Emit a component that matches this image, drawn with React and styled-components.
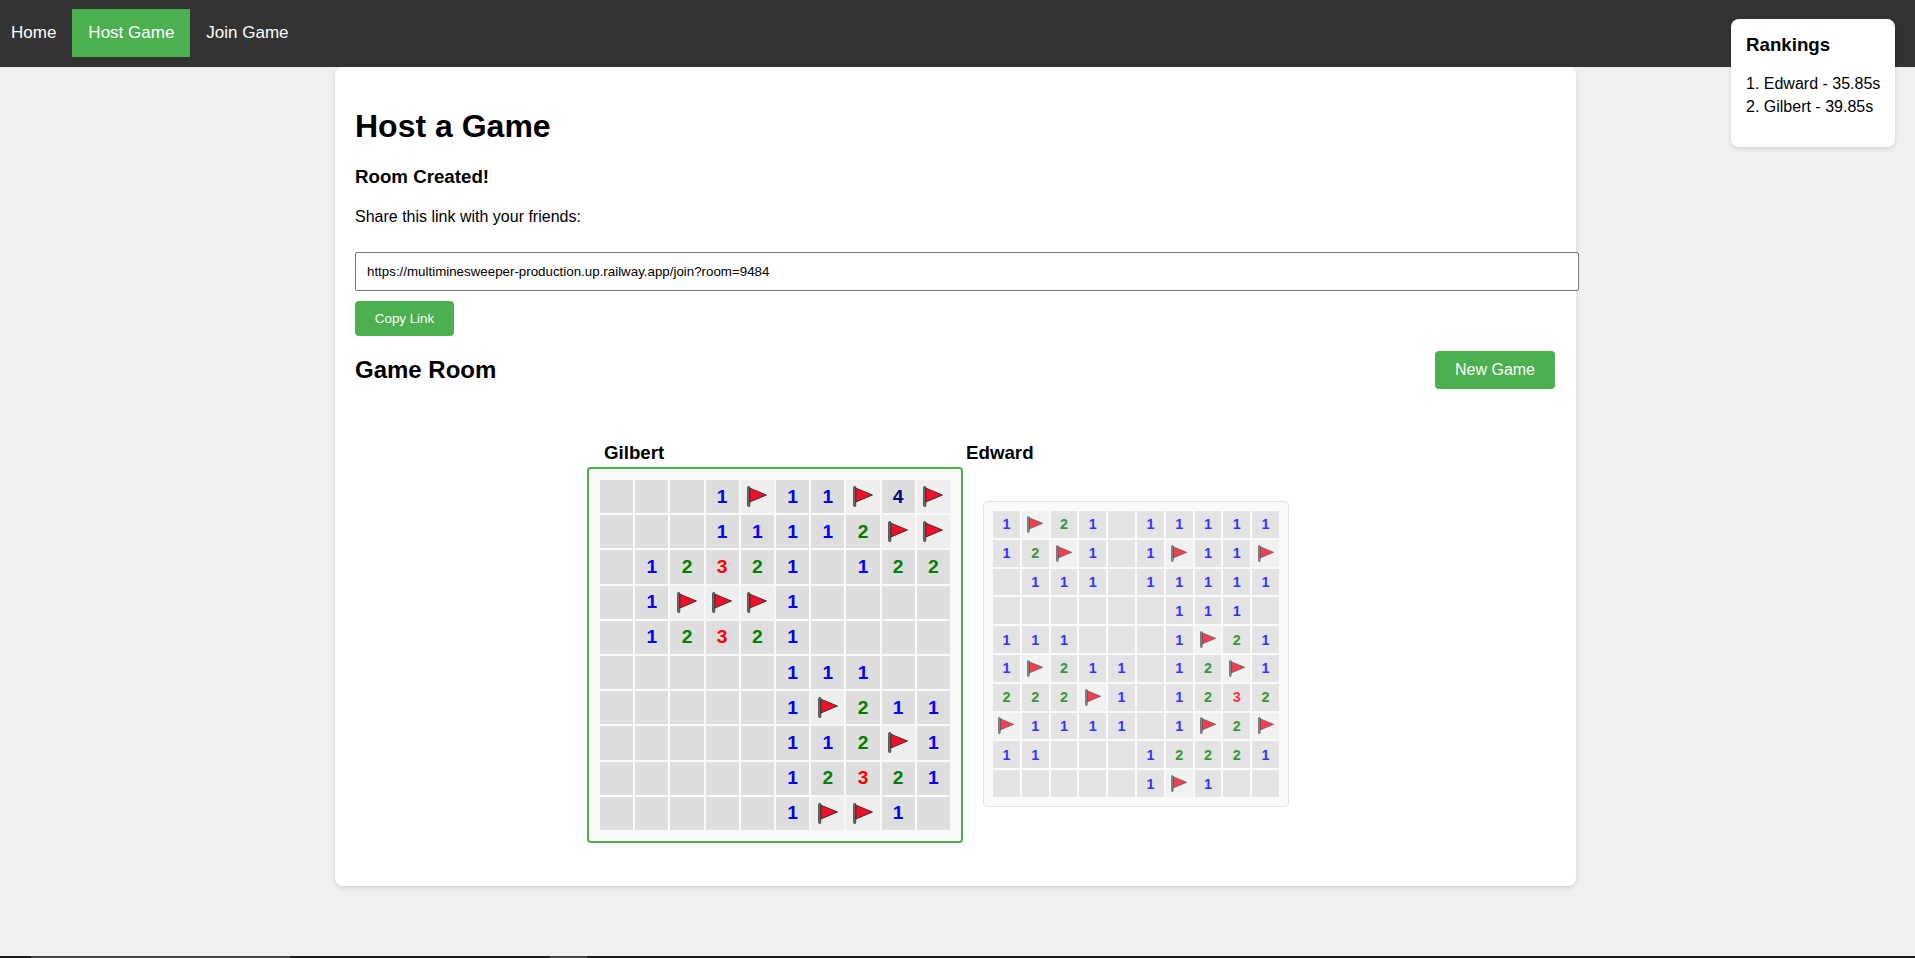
import React from "react";
import styled, { createGlobalStyle } from "styled-components";

const Global = createGlobalStyle`
  html, body { margin: 0; padding: 0; background: #f0f0f0; }
  * { box-sizing: border-box; }
  body { font-family: "Liberation Sans", Arial, sans-serif; color: #000; }
`;
const Page = styled.div`
  min-height: 958px; height: 958px; overflow: hidden; display: flex; flex-direction: column; position: relative;
`;
const Nav = styled.nav`
  background: #333; height: 67px; padding-bottom: 2px; display: flex; align-items: center; flex: none;
`;
const NavLink = styled.a`
  color: #fff; font-size: 17px; padding: 0 16px; height: 48px; line-height: 47px;
  background: ${p => (p.$active ? "#4caf50" : "transparent")};
  &:first-child { padding: 0 16px 0 11px; }
`;
const Main = styled.main`
  flex: 1; display: flex; justify-content: center; align-items: flex-start; padding-right: 4px;
`;
const Card = styled.section`
  width: 1241px; height: 819px; background: #fff; border-radius: 8px; padding: 0 20px;
  box-shadow: 0 2px 5px rgba(0,0,0,.12); flex: none;
`;
const Title = styled.h1`
  font-size: 32px; line-height: 37px; margin: 41px 0 0; font-weight: 700;
`;
const Sub = styled.h3`
  font-size: 18.72px; line-height: 22px; margin: 21px 0 0; font-weight: 700;
`;
const Para = styled.p`
  font-size: 16px; line-height: 18px; margin: 20px 0 0;
`;
const LinkInput = styled.input`
  display: block; width: 1224px; height: 39px; margin-top: 26px; padding: 0 11px;
  border: 1px solid #767676; border-radius: 2px; font: 13.33px "Liberation Sans", Arial, sans-serif; color: #000; background: #fff;
`;
const CopyButton = styled.button`
  display: block; width: 99px; height: 35px; margin-top: 10px; border: 0; border-radius: 4px;
  background: #4caf50; color: #fff; font: 400 13.33px "Liberation Sans", Arial, sans-serif; padding: 0;
`;
const RoomHead = styled.div`
  display: flex; justify-content: space-between; align-items: center; margin: 15px 1px 0 0; height: 38px;
`;
const RoomTitle = styled.h2`
  font-size: 24px; line-height: 28px; margin: 0; font-weight: 700;
`;
const NewButton = styled.button`
  width: 120px; height: 38px; border: 0; border-radius: 4px; background: #4caf50; color: #fff;
  font: 16px "Liberation Sans", Arial, sans-serif; padding: 0;
`;
const Boards = styled.div`
  display: grid; grid-template-columns: 379px auto; justify-content: start; align-items: center;
  margin: 53px 0 0 232px;
`;
const PlayerName = styled.div`
  font-size: 18.72px; font-weight: 700; line-height: 22px; height: 25px;
  padding-left: ${p => (p.$main ? "17px" : "0")};
`;
const BoardFrame = styled.div`
  background: #f9f9f9;
  border: ${p => (p.$main ? "2px solid #4caf50" : "1px solid #ddd")};
  border-radius: 4px;
  padding: ${p => (p.$main ? "11px" : "9px")};
  width: ${p => (p.$main ? "376px" : "306px")};
  margin: ${p => (p.$main ? "0" : "0 0 2px 17px")};
  opacity: ${p => (p.$main ? 1 : 0.8)};
`;
const Grid = styled.div`
  display: grid; gap: 2px;
  grid-template-columns: repeat(10, 1fr);
  grid-auto-rows: ${p => (p.$main ? "33.2px" : "26.8px")};
`;
const Cell = styled.div`
  background: ${p => (p.$flag ? "#eee" : "#ddd")};
  display: flex; align-items: center; justify-content: center;
  font-weight: 700; font-size: ${p => (p.$main ? "19.2px" : "14.4px")};
  color: ${p => ({ 1: "#0000ff", 2: "#008000", 3: "#ff0000", 4: "#000080" }[p.$n] || "#000")};
`;
const Panel = styled.aside`
  position: absolute; top: 19px; right: 20px; width: 164px; height: 128px; background: #fff; border-radius: 8px;
  padding: 15px; box-shadow: 0 2px 5px rgba(0,0,0,.12);
`;
const PanelTitle = styled.h3`
  font-size: 18.72px; line-height: 22px; margin: 0 0 16px; font-weight: 700;
`;
const RankItem = styled.div`
  font-size: 16px; line-height: 23px; white-space: nowrap;
`;
const Strip = styled.div`
  position: absolute; left: 0; right: 0; bottom: 0; height: 2px; background: #1c1c1c; display: flex;
`;
const StripTab = styled.div`
  flex: none; height: 2px; width: ${p => p.$w}px; margin-left: ${p => p.$at}px;
  background: ${p => p.$tone};
`;

const FlagIcon = ({ main }) => (
  <svg width={main ? 20 : 16} height={main ? 21 : 17} viewBox="0 0 19 20" aria-hidden="true">
    <path d="M2.4 1.9 L18.6 8.6 L2.4 15.4 Z" fill="#ed1028" stroke="#1a1a1a" strokeWidth="0.7" strokeLinejoin="round" />
    <rect x="0.6" y="0.4" width="2" height="19.2" rx="1" fill="#777" stroke="#1a1a1a" strokeWidth="0.7" />
  </svg>
);

const main = [
  "   1F11F4F", "   11112FF", " 12321 122", " 1FFF1    ", " 12321    ",
  "     111  ", "     1F211", "     112F1", "     12321", "     1FF1 ",
];
const other = [
  "1F21 11111", "12F1 1F11F", " 111 11111", "      111 ", "111   1F21",
  "1F211 12F1", "222F1 1232", "F1111 1F2F", "11   12221", "     1F1  ",
];

const Board = ({ rows, isMain }) => (
  <BoardFrame $main={isMain}>
    <Grid $main={isMain}>
      {rows.join("").split("").map((c, i) => (
        <Cell key={i} $main={isMain} $flag={c === "F"} $n={c}>
          {c === "F" ? <FlagIcon main={isMain} /> : c === " " ? "" : c}
        </Cell>
      ))}
    </Grid>
  </BoardFrame>
);

export default function App() {
  return (
    <Page>
      <Global />
      <Nav>
        <NavLink>Home</NavLink>
        <NavLink $active>Host Game</NavLink>
        <NavLink>Join Game</NavLink>
      </Nav>
      <Main>
        <Card>
          <Title>Host a Game</Title>
          <Sub>Room Created!</Sub>
          <Para>Share this link with your friends:</Para>
          <LinkInput readOnly value="https://multiminesweeper-production.up.railway.app/join?room=9484" />
          <CopyButton>Copy Link</CopyButton>
          <RoomHead>
            <RoomTitle>Game Room</RoomTitle>
            <NewButton>New Game</NewButton>
          </RoomHead>
          <Boards>
            <PlayerName $main>Gilbert</PlayerName>
            <PlayerName>Edward</PlayerName>
            <Board rows={main} isMain />
            <Board rows={other} />
          </Boards>
        </Card>
      </Main>
      <Panel>
        <PanelTitle>Rankings</PanelTitle>
        <RankItem>1. Edward - 35.85s</RankItem>
        <RankItem>2. Gilbert - 39.85s</RankItem>
      </Panel>
      <Strip>
        <StripTab $at={31} $w={259} $tone="#444" />
        <StripTab $at={260} $w={37} $tone="#444" />
      </Strip>
    </Page>
  );
}
